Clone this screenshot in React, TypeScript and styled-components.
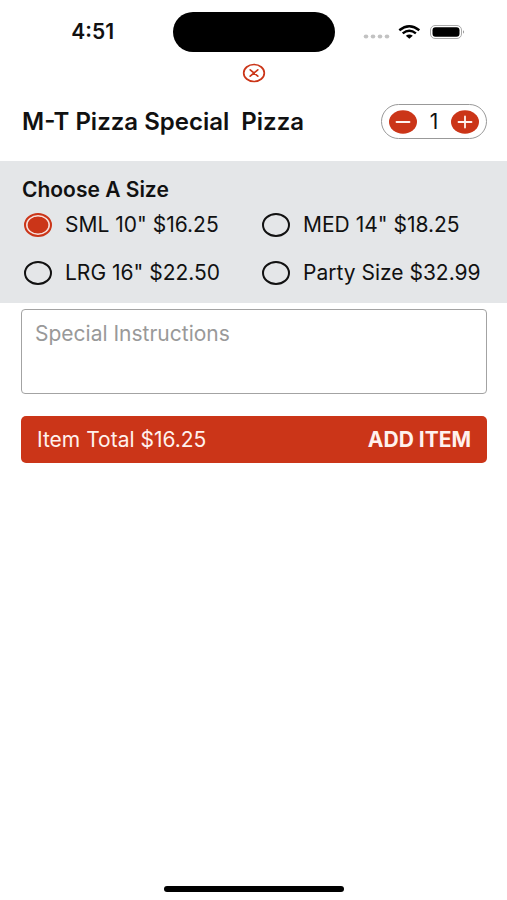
import React, { useState } from "react";
import styled, { createGlobalStyle } from "styled-components";

const red = "#cb3518";

const GlobalStyle = createGlobalStyle`
  *, *::before, *::after { box-sizing: border-box; }
  body { margin: 0; background: #fff; }
  body, button, textarea { font-family: Inter, "Liberation Sans", sans-serif; color: #111; }
`;

const Screen = styled.main`
  min-height: 100vh;
  display: flex;
  flex-direction: column;
`;

const StatusBar = styled.header`
  display: grid;
  grid-template-columns: 1fr auto 1fr;
  align-items: center;
  padding-top: 12px;
`;

const Clock = styled.time`
  justify-self: center;
  padding-left: 13px;
  font-size: 21px;
  line-height: 24px;
  font-weight: 600;
`;

const Island = styled.div`
  width: 162px;
  height: 40px;
  border-radius: 20px;
  background: #000;
`;

const StatusIcons = styled.div`
  display: flex;
  align-items: center;
  padding-left: 27px;
`;

const CloseRow = styled.div`
  display: flex;
  justify-content: center;
  padding-top: 11px;
`;

const IconButton = styled.button`
  display: flex;
  padding: 0;
  border: 0;
  background: none;
  cursor: pointer;
`;

const ItemHeader = styled.section`
  display: flex;
  align-items: center;
  justify-content: space-between;
  padding: 21px 20px 22px 22px;
`;

const ItemName = styled.h1`
  margin: 0;
  font-size: 24px;
  line-height: 28px;
  font-weight: 600;
  white-space: pre;
`;

const Stepper = styled.div`
  display: flex;
  align-items: center;
  justify-content: space-between;
  width: 106px;
  height: 35px;
  padding: 0 7px;
  border: 1px solid #999;
  border-radius: 18px;
`;

const Quantity = styled.output`
  font-size: 21px;
  line-height: 24px;
`;

const SizeSection = styled.fieldset`
  min-width: 0;
  margin: 0;
  padding: 17px 7px 18px 22px;
  border: 0;
  background: #e4e6e8;
`;

const SectionTitle = styled.legend`
  float: left;
  width: 100%;
  padding: 0;
  font-size: 21px;
  line-height: 24px;
  font-weight: 600;
`;

const SizeGrid = styled.div`
  clear: both;
  display: grid;
  grid-template-columns: 1fr 1fr;
  row-gap: 24px;
  padding: 11px 0 0 2px;
`;

const SizeOption = styled.label`
  display: flex;
  align-items: center;
  gap: 13px;
  font-size: 21px;
  line-height: 24px;
  white-space: nowrap;
  cursor: pointer;
`;

const Radio = styled.input`
  appearance: none;
  flex: none;
  width: 28px;
  height: 24px;
  margin: 0;
  padding: 1px;
  border: 2px solid #111;
  border-radius: 50%;
  cursor: pointer;

  &:checked {
    border-color: ${red};
    background: radial-gradient(closest-side, ${red} 90%, #f6ddd8 98%) content-box, #f6ddd8;
  }
`;

const OrderForm = styled.section`
  display: flex;
  flex-direction: column;
  gap: 22px;
  padding: 6px 20px 0 21px;
`;

const Instructions = styled.textarea`
  display: block;
  width: 100%;
  height: 85px;
  padding: 12px 13px;
  border: 1px solid #a3a3a3;
  border-radius: 4px;
  font-size: 21px;
  line-height: 24px;
  resize: none;

  &::placeholder { color: #999; opacity: 1; }
`;

const AddButton = styled.button`
  display: flex;
  align-items: center;
  justify-content: space-between;
  height: 47px;
  padding: 0 16px;
  border: 0;
  border-radius: 5px;
  background: ${red};
  color: #fff1ed;
  font-size: 21px;
  line-height: 24px;
  cursor: pointer;
`;

const AddLabel = styled.span`
  font-weight: 700;
`;

const HomeIndicator = styled.div`
  width: 180px;
  height: 6px;
  margin: auto auto 8px;
  border-radius: 3px;
  background: #000;
`;

const sizes = [
  { id: "sml", label: 'SML 10"', price: 16.25 },
  { id: "med", label: 'MED 14"', price: 18.25 },
  { id: "lrg", label: 'LRG 16"', price: 22.5 },
  { id: "party", label: "Party Size", price: 32.99 },
];

function PhoneStatus() {
  return (
    <StatusIcons>
      <svg width="104" height="18" viewBox="0 0 104 18" aria-label="Wi-Fi connected, battery full" role="img">
        <g fill="#c2c2c2">
          <ellipse cx="4" cy="13.5" rx="2.3" ry="2" />
          <ellipse cx="11" cy="13.5" rx="2.3" ry="2" />
          <ellipse cx="18" cy="13.5" rx="2.3" ry="2" />
          <ellipse cx="25" cy="13.5" rx="2.3" ry="2" />
        </g>
        <g fill="none" stroke="#000" strokeWidth="2.4">
          <path d="M37.3 7.2Q47.3-.8 57.3 7.2" />
          <path d="M40.7 10.4Q47.3 5 53.9 10.4" />
        </g>
        <path d="M43.8 12.7Q47.3 10.2 50.8 12.7L47.3 15.8Z" fill="#000" />
        <rect x="68.5" y="2.5" width="31" height="13" rx="4.5" fill="#fff" stroke="#aaa" />
        <rect x="70.5" y="4.2" width="27" height="9.6" rx="3" fill="#000" />
        <path d="M101 7.3Q103.2 9 101 10.7Z" fill="#999" />
      </svg>
    </StatusIcons>
  );
}

function StepIcon({ plus = false }: { plus?: boolean }) {
  return (
    <svg width="28" height="24" viewBox="0 0 28 24" aria-hidden="true">
      <ellipse cx="14" cy="12" rx="14" ry="11.7" fill={red} />
      <path
        d={plus ? "M7.5 12h13M14 6.5v11" : "M7.5 12h13"}
        stroke="#fff3ef"
        strokeWidth="1.8"
        strokeLinecap="round"
      />
    </svg>
  );
}

export default function App() {
  const [quantity, setQuantity] = useState(1);
  const [selected, setSelected] = useState("sml");
  const price = sizes.find((size) => size.id === selected)!.price;

  return (
    <Screen>
      <GlobalStyle />
      <StatusBar>
        <Clock>4:51</Clock>
        <Island />
        <PhoneStatus />
      </StatusBar>
      <CloseRow>
        <IconButton type="button" aria-label="Close">
          <svg width="24" height="20" viewBox="0 0 24 20" fill="none" stroke={red} strokeWidth="1.7" aria-hidden="true">
            <ellipse cx="12" cy="10" rx="10.3" ry="8.5" />
            <path d="M8.2 6.8l7.6 6.4M15.8 6.8l-7.6 6.4" strokeLinecap="round" />
          </svg>
        </IconButton>
      </CloseRow>
      <ItemHeader>
        <ItemName>{"M-T Pizza Special  Pizza"}</ItemName>
        <Stepper>
          <IconButton type="button" aria-label="Decrease quantity" onClick={() => setQuantity(Math.max(1, quantity - 1))}>
            <StepIcon />
          </IconButton>
          <Quantity>{quantity}</Quantity>
          <IconButton type="button" aria-label="Increase quantity" onClick={() => setQuantity(quantity + 1)}>
            <StepIcon plus />
          </IconButton>
        </Stepper>
      </ItemHeader>
      <SizeSection>
        <SectionTitle>Choose A Size</SectionTitle>
        <SizeGrid>
          {sizes.map((size) => (
            <SizeOption key={size.id}>
              <Radio
                type="radio"
                name="size"
                value={size.id}
                checked={selected === size.id}
                onChange={() => setSelected(size.id)}
              />
              {`${size.label} $${size.price.toFixed(2)}`}
            </SizeOption>
          ))}
        </SizeGrid>
      </SizeSection>
      <OrderForm>
        <Instructions aria-label="Special Instructions" placeholder="Special Instructions" />
        <AddButton type="button">
          <span>{`Item Total $${(price * quantity).toFixed(2)}`}</span>
          <AddLabel>ADD ITEM</AddLabel>
        </AddButton>
      </OrderForm>
      <HomeIndicator />
    </Screen>
  );
}
